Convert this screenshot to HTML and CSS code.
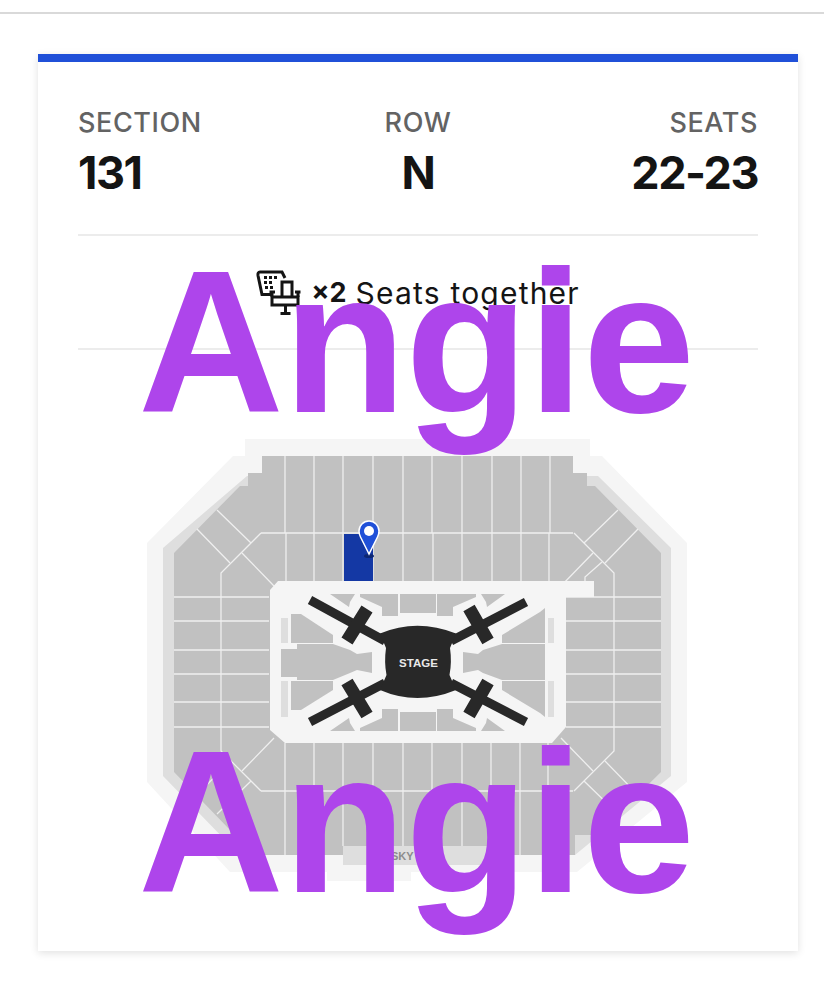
FILE: index.html
```html
<!DOCTYPE html>
<html lang="en">
<head>
    <meta charset="UTF-8">
    <meta name="viewport" content="width=device-width, initial-scale=1.0">
    <title>Ticket</title>
    <link rel="stylesheet" href="styles.css">
</head>
<body>

    <div class="top-line"></div>

    <div class="card">
        <div class="stats">
            <div class="stat">
                <div class="label">SECTION</div>
                <div class="value">131</div>
            </div>
            <div class="stat stat-center">
                <div class="label">ROW</div>
                <div class="value">N</div>
            </div>
            <div class="stat stat-right">
                <div class="label">SEATS</div>
                <div class="value">22-23</div>
            </div>
        </div>

        <div class="together">
            <svg class="seat-icon" viewBox="0 0 46 48" width="46" height="48">
                <path class="icon-line" d="M17 25.5H6L2 6.5Q1.5 3 4 3H26L29 9"/>
                <path class="icon-dots" d="M8 7h3v3H8zM13 7h3v3h-3zM18 7h3v3h-3zM8 12h3v3H8zM13 12h3v3h-3zM9 17h3v3H9zM14 17h3v3h-3z"/>
                <path class="icon-line" d="M26 28V13H36V28"/>
                <rect class="icon-line" x="16" y="28" width="26" height="8"/>
                <path class="icon-line" d="M16 28V22M13.500 23H19M42 28V22M39 23H44.500M29.500 36V44M24.500 44.500H34.500"/>
            </svg>
            <span class="count">×2</span>
            <span class="together-text">Seats together</span>
        </div>

        <svg class="map" viewBox="38 350 760 593" width="760" height="593">
            <defs>
                <g id="side-lines">
                    <path d="M261 533L221 573V751L261 791"/>
                    <path d="M217 510L251 543M197 529L230 563M242 553L274 586"/>
                    <path d="M217 814L251 781M197 795L230 761M242 771L274 738"/>
                    <path d="M174 597H269M174 621H269M174 650H269M174 674H269M174 702H269M174 727H269"/>
                </g>
            </defs>

            <path class="zone-outer" d="M245 439H590V456H602L687 543V782L577 872H411V881H327V872H230L147 782V543L233 456H245Z"/>
            <path class="zone-mid" d="M247 476H598L671 548V776L575 855H230V845L163 776V548Z"/>
            <path class="zone-seats" d="M262 456H573V473H587V486H595L661 553V772L597 835H575V855H230V830L174 772V553L240 486H248V473H262Z"/>
            <rect class="zone-mid" x="343" y="846" width="144" height="19"/>

            <g class="lines">
                <path d="M285 456V533M314 456V533M343 456V533M373 456V533M403 456V533M432 456V533M462 456V533M492 456V533M521 456V533M550 456V533"/>
                <path d="M261 533H573"/>
                <path d="M286 533V581M314 533V581M343 533V581M373 533V581M403 533V581M433 533V581M462 533V581M492 533V581M521 533V581M549 533V581"/>
                <path d="M285 743V855M314 743V846M343 743V846M373 743V846M403 743V846M432 743V846M462 743V846M491 743V846M520 743V855M548 743V791"/>
                <path d="M261 791H573"/>
                <use href="#side-lines"/>
                <use href="#side-lines" transform="matrix(-1 0 0 1 835 0)"/>
                <path d="M602 562L585 577V581"/>
            </g>

            <path class="zone-outer" d="M278 581H594V597H566V727L552 743H285L270 730V590Z"/>

            <g class="zone-seats">
                <path d="M330 594H355L350 602L349 607Z"/>
                <path d="M360 594H398V616H382V607L360 597Z"/>
                <path d="M400 594H436V613H400Z"/>
                <path d="M437 594H476V597L453 607V616H437Z"/>
                <path d="M481 594H505L487 607L486 602Z"/>
                <path d="M330 731H355L350 723L349 718Z"/>
                <path d="M360 731H398V709H382V718L360 728Z"/>
                <path d="M400 731H436V712H400Z"/>
                <path d="M437 731H476V728L453 718V709H437Z"/>
                <path d="M481 731H505L487 718L486 723Z"/>
                <path d="M291 614H301L333 635V643H291Z"/>
                <path d="M281 649H297V644H333L350 650L357 654L372 652V673L357 670L350 673L333 680H297V677H281Z"/>
                <path d="M291 681H333V690L301 710H291Z"/>
                <path d="M545 608L540 612L502 635V643H545Z"/>
                <path d="M545 644H502L483 650L478 654L463 652V673L478 670L483 673L502 680H545Z"/>
                <path d="M545 681H502V690L540 713L545 717Z"/>
            </g>
            <g class="zone-mid">
                <rect x="281" y="618" width="7" height="25"/>
                <rect x="281" y="681" width="7" height="36"/>
                <rect x="548" y="618" width="6" height="25"/>
                <rect x="548" y="681" width="6" height="36"/>
            </g>

            <g class="arms">
                <path d="M310 600L385 641M310 722L385 683M526 602L451 641M526 722L451 683"/>
            </g>
            <g class="crosses">
                <path d="M347 641L367 609M347 682L367 715M488 641L469 608M488 682L469 715"/>
            </g>
            <path class="stage" d="M380 633.500Q417 618 456 633.500L450 648Q452 662 449.500 675L456 690Q417 706 380 690L386.500 675Q384 662 386 648Z"/>
            <text class="stage-text" x="418.500" y="667">STAGE</text>
            <text class="sky-text" x="391" y="860">SKY</text>

            <rect class="section-on" x="344" y="534" width="29" height="47"/>
            <ellipse class="pin-shadow" cx="369" cy="556" rx="5" ry="2"/>
            <path class="pin" d="M369 554L360.500 537Q359 534 359 531A10 10 0 0 1 379 531Q379 534 377.500 537Z"/>
            <circle class="pin-dot" cx="369" cy="531" r="5"/>
        </svg>
    </div>

    <div class="watermark watermark-top">Angie</div>
    <div class="watermark watermark-bottom">Angie</div>

</body>
</html>
```

FILE: styles.css
```css
body {
    font-family: Inter, Arial, sans-serif;
    background-color: #fff;
    margin: 0;
    height: 994px;
    position: relative;
    overflow: hidden;
}

.top-line {
    height: 12px;
    border-bottom: 2px solid #d9d9d9;
}

.card {
    width: 760px;
    height: 889px;
    margin: 40px 0 0 38px;
    border-top: 8px solid #2050d8;
    background-color: #fff;
    box-shadow: 0 2px 8px rgba(0, 0, 0, 0.12);
}

.stats {
    display: flex;
    justify-content: space-between;
    margin: 0 40px;
    padding-top: 44px;
    height: 128px;
    border-bottom: 2px solid #ececec;
}

.stat {
    width: 200px;
}

.stat-center {
    text-align: center;
}

.stat-right {
    text-align: right;
}

.label {
    color: #636363;
    font-size: 27px;
    font-weight: 500;
    letter-spacing: 0.6px;
    line-height: 34px;
}

.value {
    color: #141414;
    font-size: 45px;
    font-weight: 700;
    letter-spacing: -1.5px;
    line-height: 52px;
    margin-top: 7px;
}

.together {
    display: flex;
    justify-content: center;
    align-items: center;
    margin: 0 40px;
    height: 112px;
    border-bottom: 2px solid #ececec;
    color: #141414;
    font-size: 30px;
    letter-spacing: 1.2px;
}

.seat-icon {
    margin-right: 9px;
    margin-top: 2px;
}

.icon-line {
    fill: none;
    stroke: #141414;
    stroke-width: 3;
}

.icon-dots {
    fill: #141414;
}

.count {
    font-size: 27px;
    font-weight: 700;
    letter-spacing: 0;
    margin-right: 9px;
}

.together-text {
    padding-top: 2px;
}

.map {
    display: block;
}

.zone-outer {
    fill: #f5f5f5;
}

.zone-mid {
    fill: #dedede;
}

.zone-seats {
    fill: #c1c1c1;
}

.lines {
    fill: none;
    stroke: #efefef;
    stroke-width: 1.3;
}

.arms {
    fill: none;
    stroke: #282828;
    stroke-width: 9;
}

.crosses {
    fill: none;
    stroke: #282828;
    stroke-width: 13;
}

.stage {
    fill: #282828;
}

.stage-text {
    fill: #e8e8e8;
    font-family: "Liberation Sans", Arial, sans-serif;
    font-size: 11.5px;
    font-weight: 700;
    text-anchor: middle;
}

.sky-text {
    fill: #8c8c8c;
    font-family: "Liberation Sans", Arial, sans-serif;
    font-size: 11px;
    font-weight: 700;
}

.section-on {
    fill: #1438a4;
}

.pin-shadow {
    fill: #0d2672;
}

.pin {
    fill: #2050d8;
    stroke: #fff;
    stroke-width: 1.5;
}

.pin-dot {
    fill: #fff;
}

/* marca de agua encima de la tarjeta */
.watermark {
    position: absolute;
    left: 138px;
    color: #ae45eb;
    font-family: "Liberation Sans", Arial, sans-serif;
    font-size: 202px;
    font-weight: 700;
    letter-spacing: -1px;
    line-height: 200px;
}

.watermark-top {
    top: 242px;
}

.watermark-bottom {
    top: 722px;
}
```
